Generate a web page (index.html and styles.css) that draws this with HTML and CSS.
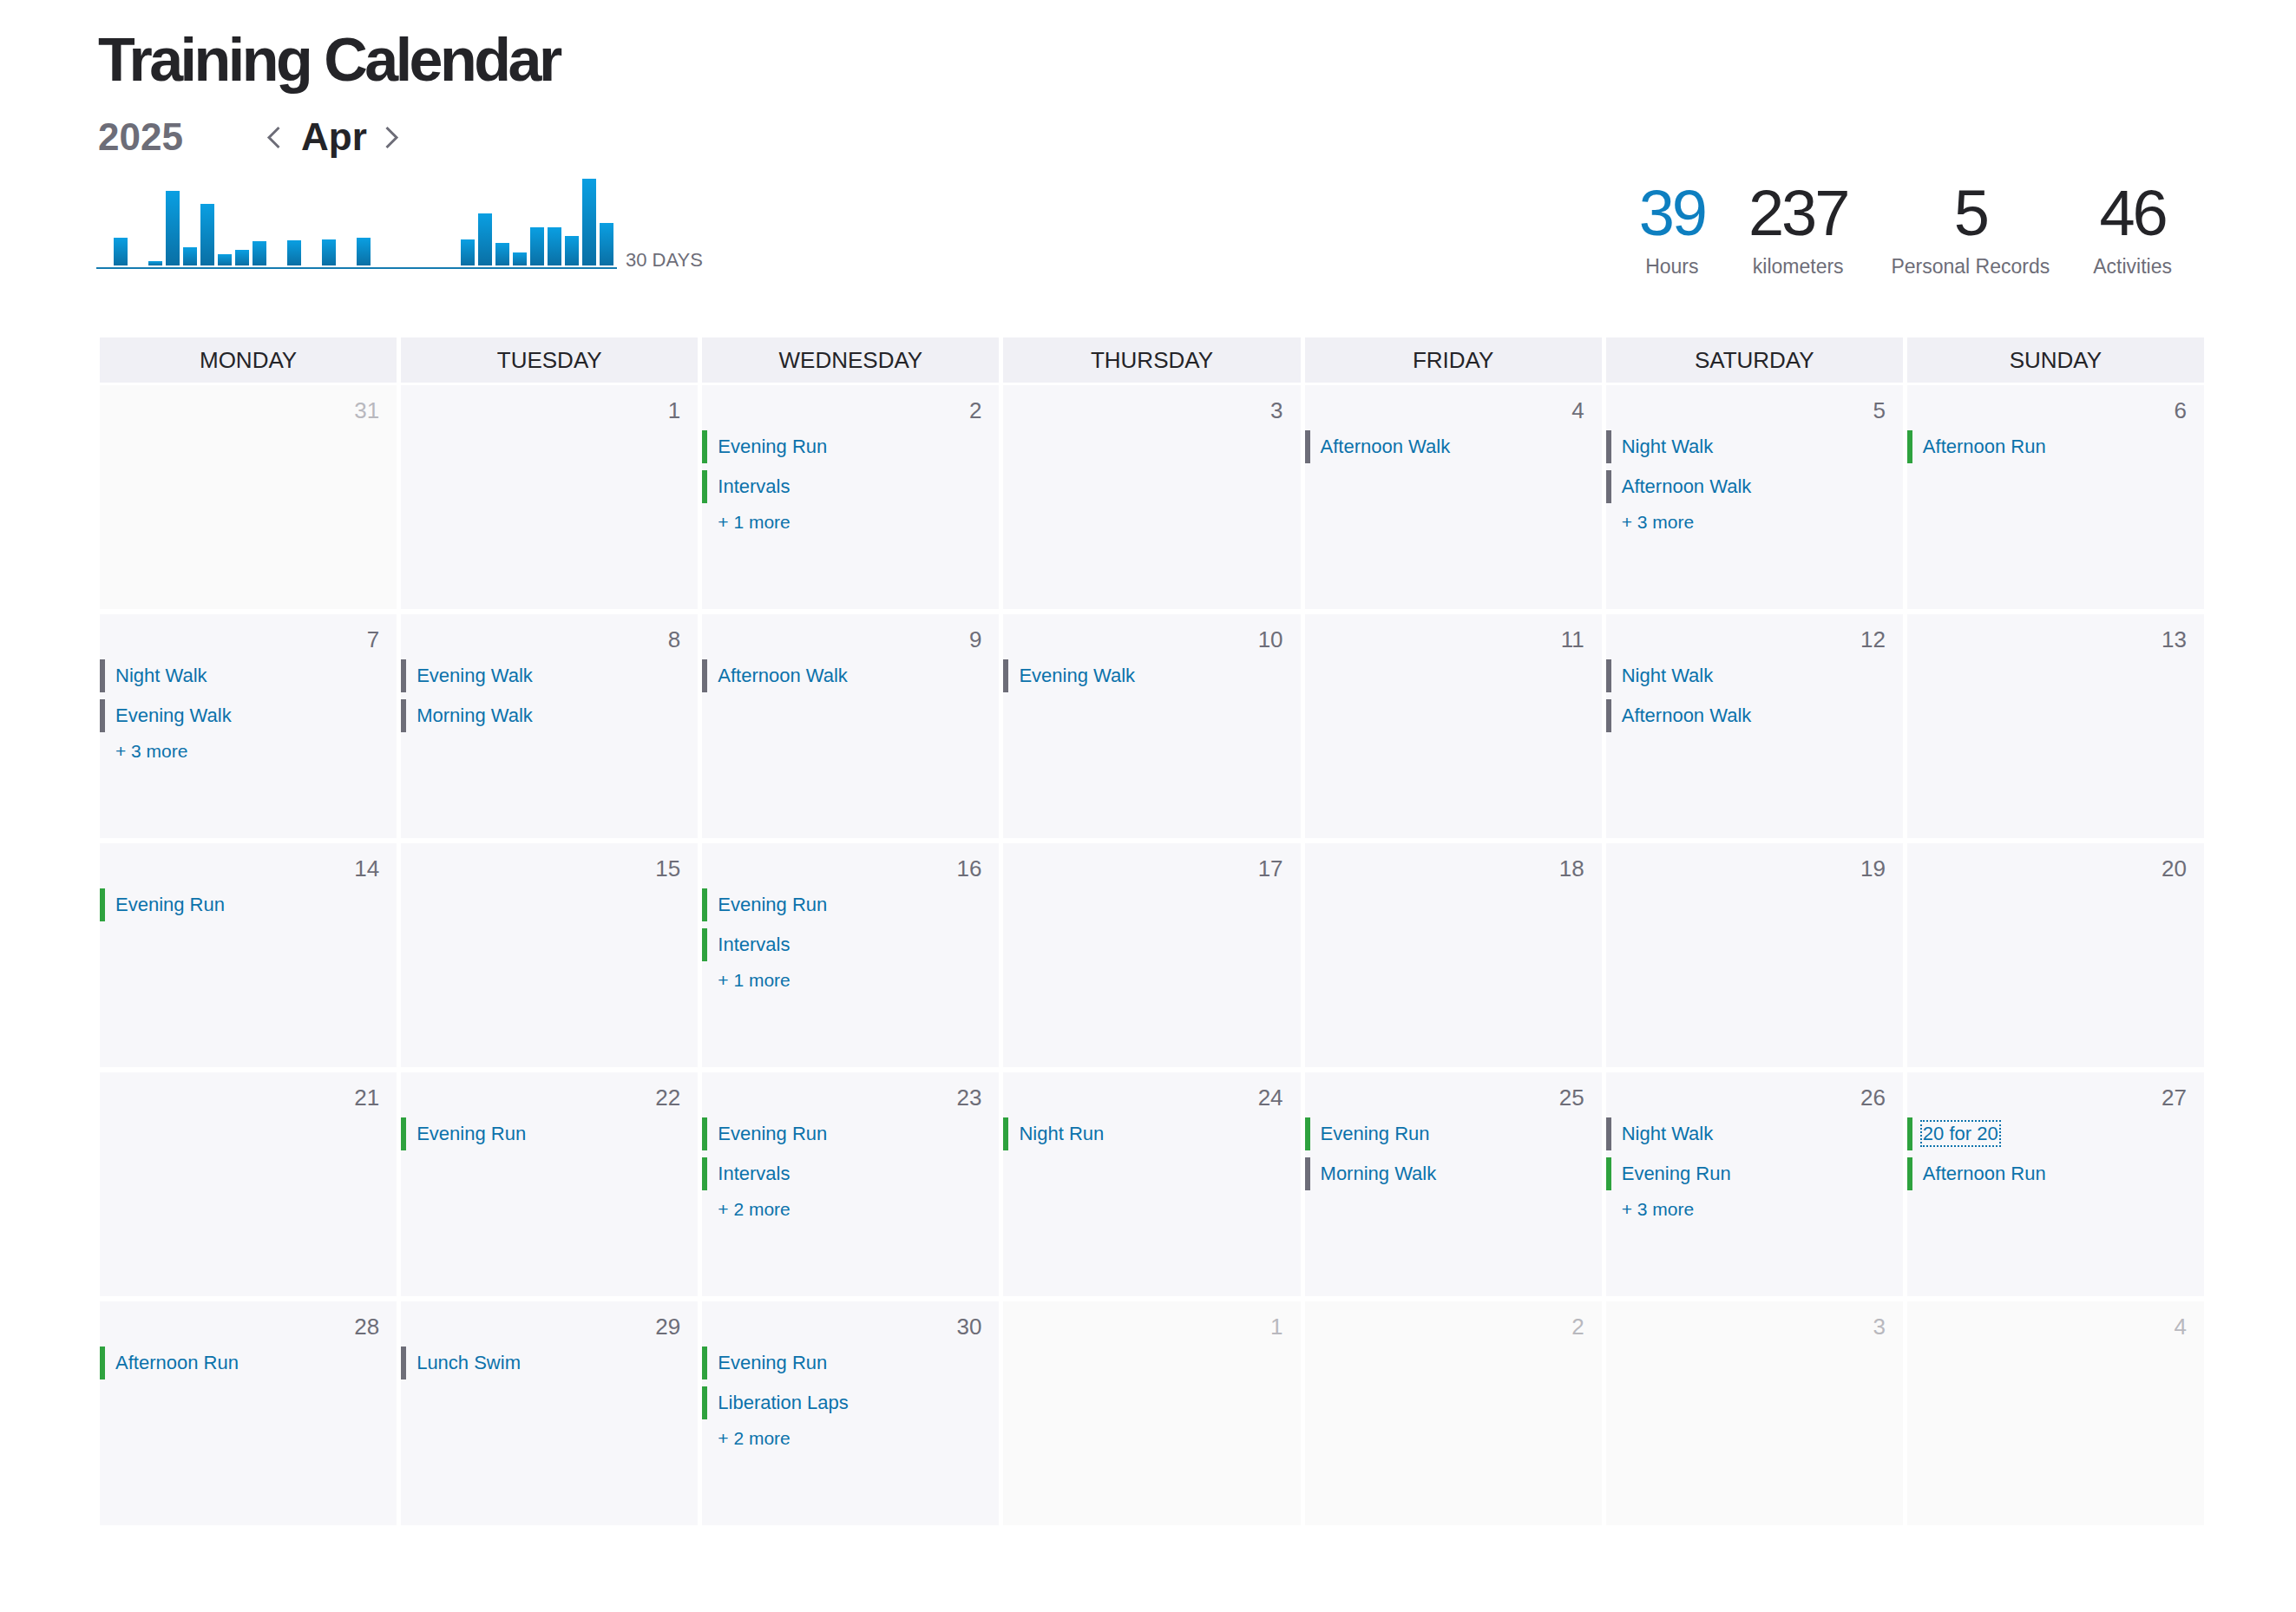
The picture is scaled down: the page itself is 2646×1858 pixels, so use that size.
FILE: index.html
```html
<!DOCTYPE html>
<html>
<head>
    <title>Training Calendar</title>
    <link rel="stylesheet" href="styles.css">
</head>
<body>
    <div class="page">
        <h1 class="page-title">Training Calendar</h1>

        <div class="period">
            <span class="year">2025</span>
            <button class="nav-arrow" title="Previous month">
                <svg width="17" height="27" viewBox="0 0 17 27"><polyline points="14.5,2 3,13.5 14.5,25" /></svg>
            </button>
            <span class="month">Apr</span>
            <button class="nav-arrow" title="Next month">
                <svg width="17" height="27" viewBox="0 0 17 27"><polyline points="2.5,2 14,13.5 2.5,25" /></svg>
            </button>
        </div>

        <div class="summary">
            <div class="trend">
                <svg class="trend-chart" width="600" height="106" viewBox="0 0 600 106">
                    <defs>
                        <linearGradient id="bar-fill" x1="0" y1="0" x2="0" y2="1">
                            <stop offset="0" stop-color="#0a9fe2" />
                            <stop offset="1" stop-color="#0a6fa4" />
                        </linearGradient>
                    </defs>
                    <g fill="url(#bar-fill)">
                        <rect x="20" y="70" width="16" height="32" />
                        <rect x="60" y="97" width="16" height="5" />
                        <rect x="80" y="16" width="16" height="86" />
                        <rect x="100" y="81" width="16" height="21" />
                        <rect x="120" y="31" width="16" height="71" />
                        <rect x="140" y="89" width="16" height="13" />
                        <rect x="160" y="84" width="16" height="18" />
                        <rect x="180" y="74" width="16" height="28" />
                        <rect x="220" y="73" width="16" height="29" />
                        <rect x="260" y="72" width="16" height="30" />
                        <rect x="300" y="70" width="16" height="32" />
                        <rect x="420" y="72" width="16" height="30" />
                        <rect x="440" y="42" width="16" height="60" />
                        <rect x="460" y="76" width="16" height="26" />
                        <rect x="480" y="87" width="16" height="15" />
                        <rect x="500" y="58" width="16" height="44" />
                        <rect x="520" y="58" width="16" height="44" />
                        <rect x="540" y="68" width="16" height="34" />
                        <rect x="560" y="2" width="16" height="100" />
                        <rect x="580" y="53" width="16" height="49" />
                    </g>
                    <rect x="0" y="104" width="600" height="2" fill="#157bb0" />
                </svg>
                <span class="trend-label">30 DAYS</span>
            </div>

            <div class="stats">
                <div class="stat">
                    <div class="stat-value highlight">39</div>
                    <div class="stat-label">Hours</div>
                </div>
                <div class="stat">
                    <div class="stat-value">237</div>
                    <div class="stat-label">kilometers</div>
                </div>
                <div class="stat">
                    <div class="stat-value">5</div>
                    <div class="stat-label">Personal Records</div>
                </div>
                <div class="stat">
                    <div class="stat-value">46</div>
                    <div class="stat-label">Activities</div>
                </div>
            </div>
        </div>

        <div class="weekdays">
            <div class="weekday">MONDAY</div>
            <div class="weekday">TUESDAY</div>
            <div class="weekday">WEDNESDAY</div>
            <div class="weekday">THURSDAY</div>
            <div class="weekday">FRIDAY</div>
            <div class="weekday">SATURDAY</div>
            <div class="weekday">SUNDAY</div>
        </div>

        <div class="weeks">
            <!-- week 1 -->
            <div class="day other-month"><div class="day-number">31</div></div>
            <div class="day"><div class="day-number">1</div></div>
            <div class="day">
                <div class="day-number">2</div>
                <div class="event run"><a>Evening Run</a></div>
                <div class="event run"><a>Intervals</a></div>
                <div class="event-more">+ 1 more</div>
            </div>
            <div class="day"><div class="day-number">3</div></div>
            <div class="day">
                <div class="day-number">4</div>
                <div class="event walk"><a>Afternoon Walk</a></div>
            </div>
            <div class="day">
                <div class="day-number">5</div>
                <div class="event walk"><a>Night Walk</a></div>
                <div class="event walk"><a>Afternoon Walk</a></div>
                <div class="event-more">+ 3 more</div>
            </div>
            <div class="day">
                <div class="day-number">6</div>
                <div class="event run"><a>Afternoon Run</a></div>
            </div>

            <!-- week 2 -->
            <div class="day">
                <div class="day-number">7</div>
                <div class="event walk"><a>Night Walk</a></div>
                <div class="event walk"><a>Evening Walk</a></div>
                <div class="event-more">+ 3 more</div>
            </div>
            <div class="day">
                <div class="day-number">8</div>
                <div class="event walk"><a>Evening Walk</a></div>
                <div class="event walk"><a>Morning Walk</a></div>
            </div>
            <div class="day">
                <div class="day-number">9</div>
                <div class="event walk"><a>Afternoon Walk</a></div>
            </div>
            <div class="day">
                <div class="day-number">10</div>
                <div class="event walk"><a>Evening Walk</a></div>
            </div>
            <div class="day"><div class="day-number">11</div></div>
            <div class="day">
                <div class="day-number">12</div>
                <div class="event walk"><a>Night Walk</a></div>
                <div class="event walk"><a>Afternoon Walk</a></div>
            </div>
            <div class="day"><div class="day-number">13</div></div>

            <!-- week 3 -->
            <div class="day">
                <div class="day-number">14</div>
                <div class="event run"><a>Evening Run</a></div>
            </div>
            <div class="day"><div class="day-number">15</div></div>
            <div class="day">
                <div class="day-number">16</div>
                <div class="event run"><a>Evening Run</a></div>
                <div class="event run"><a>Intervals</a></div>
                <div class="event-more">+ 1 more</div>
            </div>
            <div class="day"><div class="day-number">17</div></div>
            <div class="day"><div class="day-number">18</div></div>
            <div class="day"><div class="day-number">19</div></div>
            <div class="day"><div class="day-number">20</div></div>

            <!-- week 4 -->
            <div class="day"><div class="day-number">21</div></div>
            <div class="day">
                <div class="day-number">22</div>
                <div class="event run"><a>Evening Run</a></div>
            </div>
            <div class="day">
                <div class="day-number">23</div>
                <div class="event run"><a>Evening Run</a></div>
                <div class="event run"><a>Intervals</a></div>
                <div class="event-more">+ 2 more</div>
            </div>
            <div class="day">
                <div class="day-number">24</div>
                <div class="event run"><a>Night Run</a></div>
            </div>
            <div class="day">
                <div class="day-number">25</div>
                <div class="event run"><a>Evening Run</a></div>
                <div class="event walk"><a>Morning Walk</a></div>
            </div>
            <div class="day">
                <div class="day-number">26</div>
                <div class="event walk"><a>Night Walk</a></div>
                <div class="event run"><a>Evening Run</a></div>
                <div class="event-more">+ 3 more</div>
            </div>
            <div class="day">
                <div class="day-number">27</div>
                <div class="event run"><a class="focused">20 for 20</a></div>
                <div class="event run"><a>Afternoon Run</a></div>
            </div>

            <!-- week 5 -->
            <div class="day">
                <div class="day-number">28</div>
                <div class="event run"><a>Afternoon Run</a></div>
            </div>
            <div class="day">
                <div class="day-number">29</div>
                <div class="event walk"><a>Lunch Swim</a></div>
            </div>
            <div class="day">
                <div class="day-number">30</div>
                <div class="event run"><a>Evening Run</a></div>
                <div class="event run"><a>Liberation Laps</a></div>
                <div class="event-more">+ 2 more</div>
            </div>
            <div class="day other-month"><div class="day-number">1</div></div>
            <div class="day other-month"><div class="day-number">2</div></div>
            <div class="day other-month"><div class="day-number">3</div></div>
            <div class="day other-month"><div class="day-number">4</div></div>
        </div>
    </div>
</body>
</html>
```

FILE: styles.css
```css
body {
    margin: 0;
    background-color: #fff;
    color: #242428;
    font-family: "Liberation Sans", Arial, sans-serif;
}
.page {
    padding: 0 106px 0 113px;
}
.page-title {
    margin: 34px 0 0;
    font-size: 70px;
    line-height: 70px;
    font-weight: bold;
    letter-spacing: -3.5px;
    color: #242428;
}

/* year / month switcher */
.period {
    display: flex;
    align-items: center;
    margin-top: 32px;
    height: 44px;
}
.year {
    width: 194px;
    font-size: 44px;
    line-height: 44px;
    font-weight: bold;
    color: #6d6d78;
}
.month {
    margin: 0 20px 0 23px;
    font-size: 44px;
    line-height: 44px;
    font-weight: bold;
    color: #242428;
}
.nav-arrow {
    display: flex;
    padding: 0;
    border: none;
    background: none;
    cursor: pointer;
}
.nav-arrow polyline {
    fill: none;
    stroke: #6d6d78;
    stroke-width: 3;
}

/* bar chart and totals */
.summary {
    display: flex;
    justify-content: space-between;
    align-items: flex-end;
    margin-top: 24px;
}
.trend {
    display: flex;
    align-items: flex-end;
    margin-left: -2px;
}
.trend-chart {
    display: block;
}
.trend-label {
    margin: 0 0 -1px 10px;
    font-size: 22px;
    line-height: 22px;
    color: #6d6d78;
}
.stats {
    display: flex;
    gap: 50px;
    margin: 0 37px -11px 0;
}
.stat {
    text-align: center;
}
.stat-value {
    font-size: 74px;
    line-height: 74px;
    letter-spacing: -3px;
    color: #242428;
}
.stat-value.highlight {
    color: #0e7fc0;
}
.stat-label {
    margin-top: 10px;
    font-size: 23px;
    line-height: 28px;
    color: #6d6d78;
}

/* calendar */
.weekdays,
.weeks {
    display: grid;
    grid-template-columns: repeat(7, 1fr);
    column-gap: 5px;
    margin-left: 2px;
}
.weekdays {
    margin-top: 79px;
}
.weekday {
    height: 52px;
    line-height: 52px;
    text-align: center;
    font-size: 26px;
    background-color: #f0f0f5;
    color: #242428;
}
.weeks {
    margin-top: 3px;
    grid-auto-rows: 258px;
    row-gap: 6px;
}
.day {
    padding-top: 14px;
    background-color: #f7f7fa;
}
.day.other-month {
    background-color: #fafafa;
}
.day-number {
    padding-right: 20px;
    margin-bottom: 8px;
    text-align: right;
    font-size: 26px;
    line-height: 30px;
    color: #6d6d78;
}
.other-month .day-number {
    color: #b8b8be;
}
.event {
    height: 38px;
    margin-bottom: 8px;
    padding-left: 12px;
    border-left: 6px solid #6d6d78;
    font-size: 22px;
    line-height: 38px;
}
.event.run {
    border-left-color: #2ea23e;
}
.event a {
    color: #0b72ab;
    cursor: pointer;
}
.event a.focused {
    outline: 2px dotted #0b72ab;
    outline-offset: 1px;
}
.event-more {
    padding-left: 18px;
    font-size: 21px;
    line-height: 28px;
    color: #0b72ab;
}
```
